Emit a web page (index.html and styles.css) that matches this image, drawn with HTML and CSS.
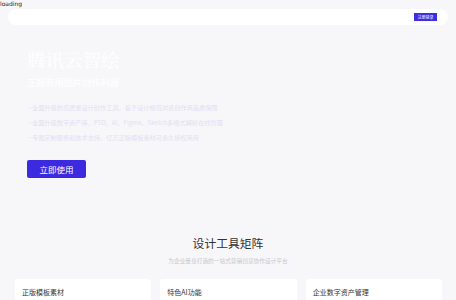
FILE: index.html
```html
<!DOCTYPE html>
<html lang="zh-CN">
<head>
    <meta charset="UTF-8">
    <meta name="viewport" content="width=device-width, initial-scale=1.0">
    <title>腾讯云智绘</title>
    <link rel="stylesheet" href="styles.css">
</head>
<body>

    <!-- Loading marker -->
    <div class="loading">loading</div>

    <!-- Top Nav -->
    <header class="nav">
        <a href="#" class="nav-btn">注册登录</a>
    </header>

    <!-- Hero Section -->
    <section class="hero">
        <h1>腾讯云智绘</h1>
        <p class="hero-sub">正版商用图片创作利器</p>
        <ul class="hero-list">
            <li>全面升级的高质量设计创作工具，基于设计规范对该创作商品质保障</li>
            <li>全面升级数字资产库，PSD、AI、Figma、Sketch多格式解析在线管理</li>
            <li>专属定制服务和技术支持，亿万正版模板素材可永久授权商用</li>
        </ul>
        <a href="#" class="hero-btn">立即使用</a>
    </section>

    <!-- Tools Section -->
    <section class="tools">
        <h2>设计工具矩阵</h2>
        <p class="tools-sub">为企业量身打造的一站式营销创意协作设计平台</p>
        <div class="cards">
            <div class="card"><h3>正版模板素材</h3></div>
            <div class="card"><h3>特色AI功能</h3></div>
            <div class="card"><h3>企业数字资产管理</h3></div>
        </div>
    </section>

</body>
</html>
```

FILE: styles.css
```css
/* General Reset */
* {
    margin: 0;
    padding: 0;
    box-sizing: border-box;
}

body {
    background: #f7f7f9;
    color: #333;
    font-family: 'Noto Sans CJK SC', 'Noto Sans', sans-serif;
    overflow: hidden;
}

.loading {
    position: absolute;
    top: 0;
    left: 0;
    font-size: 6px;
    line-height: 8px;
    color: #222;
    font-family: 'DejaVu Sans', sans-serif;
}

/* Nav */
.nav {
    margin: 9px 8px 0;
    height: 16px;
    background: #fff;
    border-radius: 8px;
    display: flex;
    justify-content: flex-end;
    align-items: center;
    padding-right: 11px;
}

.nav-btn {
    display: block;
    width: 23px;
    height: 8px;
    background: #3b2ee3;
    color: #fff;
    font-size: 4px;
    line-height: 8px;
    text-align: center;
    text-decoration: none;
}

/* Hero */
.hero {
    padding: 22px 0 0 27px;
    height: 190px;
}

.hero h1 {
    font-size: 18.5px;
    line-height: 24px;
    font-weight: 400;
    color: #fff;
    font-family: 'Noto Serif CJK SC', 'Noto Sans CJK SC', serif;
}

.hero-sub {
    margin-top: 5px;
    font-size: 9.2px;
    line-height: 12px;
    color: #fff;
}

.hero-list {
    list-style: none;
    margin-top: 11.5px;
}

.hero-list li {
    font-size: 6.2px;
    line-height: 15px;
    color: #e2e0f3;
    padding-left: 5px;
    position: relative;
}

.hero-list li::before {
    content: '·';
    position: absolute;
    left: 0;
}

.hero-btn {
    display: inline-block;
    margin-top: 15.5px;
    width: 59px;
    height: 18px;
    background: #3b2ae0;
    border-radius: 2px;
    color: #fff;
    font-size: 8.5px;
    line-height: 18px;
    text-align: center;
    text-decoration: none;
}

/* Tools */
.tools {
    text-align: center;
    padding-top: 20px;
}

.tools h2 {
    font-size: 11.8px;
    line-height: 16px;
    font-weight: 400;
    color: #333;
}

.tools-sub {
    margin-top: 6px;
    font-size: 5.7px;
    line-height: 8px;
    color: #c8c8cc;
}

.cards {
    display: flex;
    gap: 9px;
    padding: 0 14px 0 15px;
    margin-top: 14px;
}

.card {
    flex: 1;
    height: 60px;
    background: #fff;
    border-radius: 3px;
    text-align: left;
    padding: 8px 7px;
}

.card h3 {
    font-size: 7px;
    line-height: 10px;
    font-weight: 400;
    color: #333;
}
```
